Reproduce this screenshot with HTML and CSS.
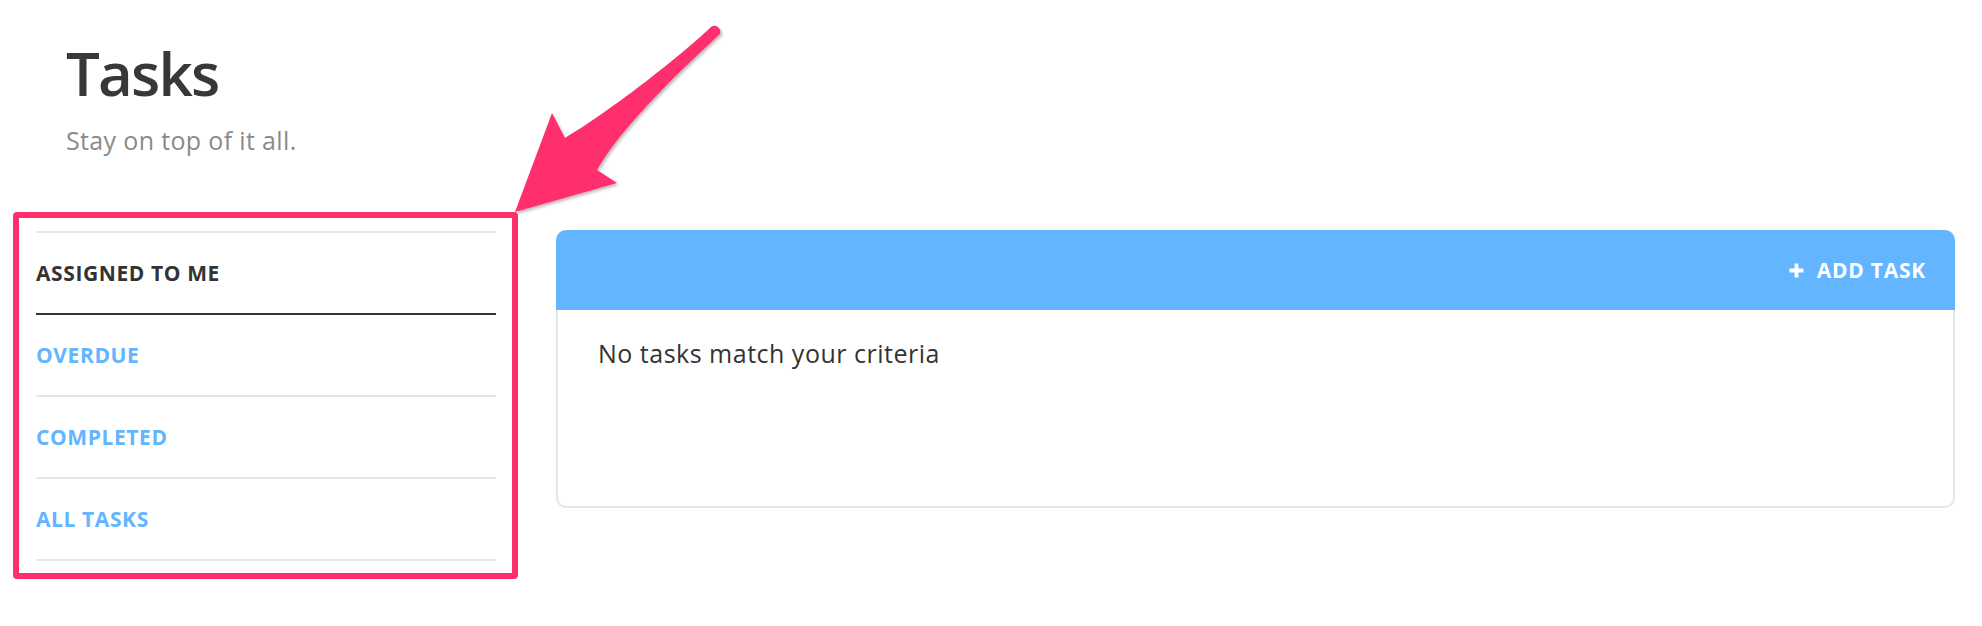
FILE: index.html
```html
<!DOCTYPE html>
<html lang="en">
<head>
<meta charset="utf-8">
<title>Tasks</title>
<link rel="stylesheet" href="styles.css">
</head>
<body>
<div class="page">
  <header class="page-header">
    <h1 class="title">Tasks</h1>
    <p class="subtitle">Stay on top of it all.</p>
  </header>
  <main class="content">
    <div class="annot">
      <nav class="filters">
        <ul class="filter-list">
          <li class="filter-item active"><a href="#">ASSIGNED TO ME</a></li>
          <li class="filter-item"><a href="#">OVERDUE</a></li>
          <li class="filter-item"><a href="#">COMPLETED</a></li>
          <li class="filter-item"><a href="#">ALL TASKS</a></li>
        </ul>
      </nav>
    </div>
    <section class="card">
      <div class="card-header">
        <a class="add-task" href="#">
          <svg class="plus" width="17" height="17" viewBox="0 0 17 17" aria-hidden="true"><path d="M8.5 1.5v14M1.5 8.5h14" stroke="#fff" stroke-width="3.8" fill="none"/></svg>
          <span>ADD TASK</span>
        </a>
      </div>
      <div class="card-body">
        <p class="empty">No tasks match your criteria</p>
      </div>
    </section>
  </main>
  <svg class="arrow" width="1982" height="626" viewBox="0 0 1982 626" aria-hidden="true">
    <defs>
      <filter id="sh" x="-20%" y="-20%" width="140%" height="140%">
        <feDropShadow dx="1.5" dy="2" stdDeviation="1.5" flood-color="#000" flood-opacity="0.28"/>
      </filter>
    </defs>
    <path filter="url(#sh)" fill="#ff2f6d" d="M711 27 C 685 52, 615 108, 565 138 L 552 113 L 515 212 L 617 183 L 597 170 C 620 130, 670 80, 720 34 A 6 6 0 0 0 711 27 Z"/>
  </svg>
</div>
</body>
</html>
```
FILE: styles.css
```css
* { box-sizing: border-box; }
html, body { margin: 0; padding: 0; background: #fff; }
body {
  font-family: "Open Sans", "Liberation Sans", sans-serif;
  color: #333;
  width: 1982px;
  height: 626px;
  overflow: hidden;
}
.page { position: relative; width: 1982px; height: 626px; }

.page-header { padding: 40px 0 0 66px; }
.title {
  margin: 0;
  font-size: 60px;
  line-height: 66px;
  font-weight: 600;
  color: #383838;
  letter-spacing: -1.8px;
}
.subtitle {
  margin: 18px 0 0;
  font-size: 25px;
  line-height: 32px;
  letter-spacing: 0.35px;
  color: #8a8a8a;
}

.content {
  display: flex;
  align-items: flex-start;
  margin-top: 56px;
  padding: 0 27px 0 13px;
}

.annot {
  flex: none;
  border: 6px solid #ff2f6d;
  border-radius: 4px;
  padding: 13px 16px 12px 17px;
}
.filters { width: 460px; }
.filter-list {
  list-style: none;
  margin: 0;
  padding: 0;
  border-top: 2px solid #e6e6e6;
}
.filter-item {
  height: 82px;
  display: flex;
  align-items: center;
  border-bottom: 2px solid #e6e6e6;
}
.filter-item a {
  text-decoration: none;
  font-size: 21px;
  font-weight: 700;
  letter-spacing: 0.6px;
  color: #62b5fe;
}
.filter-item.active { border-bottom-color: #333; }
.filter-item.active a { color: #333; }

.card {
  flex: 1;
  margin: 18px 0 0 38px;
}
.card-header {
  height: 80px;
  background: #62b5fe;
  border-radius: 10px 10px 0 0;
  display: flex;
  align-items: center;
  justify-content: flex-end;
  padding-right: 29px;
}
.add-task {
  display: flex;
  align-items: center;
  gap: 12px;
  color: #fff;
  text-decoration: none;
  font-size: 21px;
  font-weight: 700;
  letter-spacing: 0.75px;
}
.plus { display: block; }
.card-body {
  height: 198px;
  border: 2px solid #e6e6e6;
  border-top: none;
  border-radius: 0 0 10px 10px;
  padding: 27px 40px 0;
}
.empty {
  margin: 0;
  font-size: 25px;
  line-height: 32px;
  letter-spacing: 0.5px;
  color: #333;
}

.arrow {
  position: absolute;
  top: 0;
  left: 0;
  pointer-events: none;
}
```
